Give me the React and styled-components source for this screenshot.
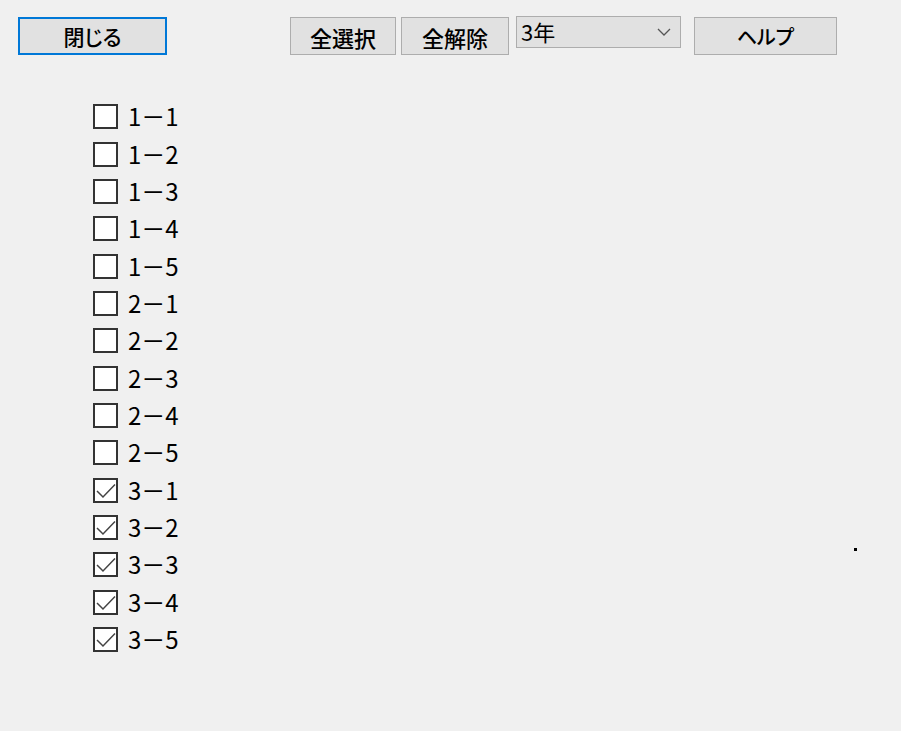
import React, {useState} from 'react'
import styled, {createGlobalStyle} from 'styled-components'

const GlobalStyles = createGlobalStyle`
	html, body {
		margin: 0;
		padding: 0;
		background: #f0f0f0;
	}
	body {
		font-family: "Noto Sans CJK JP", "Liberation Sans", sans-serif;
		color: #000;
	}
`

const Page = styled.div`
	position: relative;
	width: 901px;
	height: 731px;
	background: #f0f0f0;
	overflow: hidden;
`

const Toolbar = styled.div`
	display: flex;
	align-items: flex-start;
	padding: 17px 0 0 18px;
`

const Button = styled.button`
	box-sizing: border-box;
	width: ${p => p.$width}px;
	height: 38px;
	margin-left: ${p => p.$gap || 0}px;
	padding: 0;
	background: #e1e1e1;
	border: ${p => p.$focused ? '2px solid #0078d7' : '1px solid #adadad'};
	font-family: "Noto Sans CJK JP", sans-serif;
	font-size: ${p => p.$size || 22}px;
	font-weight: 500;
	font-feature-settings: "palt";
	line-height: 1;
	color: #000;
	display: flex;
	align-items: center;
	justify-content: center;
	padding-top: 1px;
`

const Combo = styled.div`
	box-sizing: border-box;
	width: 165px;
	height: 32px;
	margin-top: -1px;
	margin-left: 7px;
	background: #e1e1e1;
	border: 1px solid #adadad;
	display: flex;
	align-items: center;
	justify-content: space-between;
	padding: 0 9px 0 4px;
	font-size: 22px;
	line-height: 1;
`

const ComboText = styled.span`
	font-family: "Noto Sans CJK JP", sans-serif;
	margin-top: -2px;
`

const List = styled.div`
	display: flex;
	flex-direction: column;
	padding: 43px 0 0 93px;
`

const Row = styled.label`
	display: flex;
	align-items: center;
	height: 37.36px;
	gap: 10px;
`

const Box = styled.span`
	box-sizing: border-box;
	width: 25px;
	height: 25px;
	background: #fff;
	border: 2px solid #333;
	display: flex;
	align-items: center;
	justify-content: center;
`

const Label = styled.span`
	font-family: "Noto Sans CJK JP", sans-serif;
	font-size: 24px;
	line-height: 1;
	margin-top: -1px;
`

const Dot = styled.div`
	position: absolute;
	left: 854px;
	top: 548px;
	width: 3px;
	height: 3px;
	background: #000;
`

const Check = () => (
	<svg width="21" height="21" viewBox="0 0 21 21">
		<polyline points="2,11 8,17 20,4.5" fill="none" stroke="#444" strokeWidth="1.5"/>
	</svg>
)

const Chevron = () => (
	<svg width="14" height="8" viewBox="0 0 14 8">
		<polyline points="1,1 7,7 13,1" fill="none" stroke="#555" strokeWidth="1.3"/>
	</svg>
)

const classes = []
for (let g = 1; g <= 3; g++) {
	for (let c = 1; c <= 5; c++) {
		classes.push({grade: g, cls: c})
	}
}

export default function App() {
	const [checked] = useState(classes.map(k => k.grade === 3))

	return (
		<Page>
			<GlobalStyles/>
			<Toolbar>
				<Button $width={149} $focused $size={21}>閉じる</Button>
				<Button $width={106} $gap={123}>全選択</Button>
				<Button $width={108} $gap={5}>全解除</Button>
				<Combo>
					<ComboText>3年</ComboText>
					<Chevron/>
				</Combo>
				<Button $width={143} $gap={13} $size={20}>ヘルプ</Button>
			</Toolbar>
			<List>
				{classes.map((k, i) => (
					<Row key={i}>
						<Box>{checked[i] && <Check/>}</Box>
						<Label>{k.grade}－{k.cls}</Label>
					</Row>
				))}
			</List>
			<Dot/>
		</Page>
	)
}
